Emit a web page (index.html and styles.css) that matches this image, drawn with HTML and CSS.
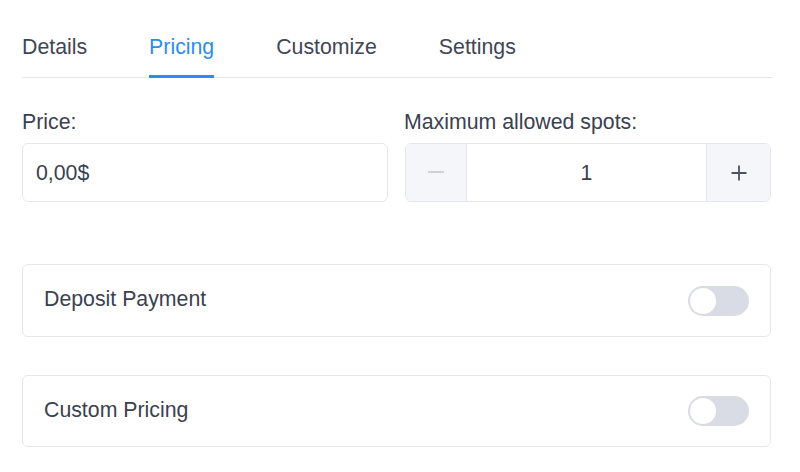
FILE: index.html
```html
<!DOCTYPE html>
<html>
<head>
<meta charset="utf-8">
<link rel="stylesheet" href="styles.css">
</head>
<body>
<div class="page">
  <nav class="tabs">
    <div class="tab">Details</div>
    <div class="tab active">Pricing</div>
    <div class="tab">Customize</div>
    <div class="tab">Settings</div>
  </nav>

  <div class="fields">
    <div class="field">
      <div class="label">Price:</div>
      <div class="input">0,00$</div>
    </div>
    <div class="field">
      <div class="label">Maximum allowed spots:</div>
      <div class="stepper">
        <div class="step-btn minus"><span class="minus-bar"></span></div>
        <div class="step-value">1</div>
        <div class="step-btn plus">
          <svg width="18" height="18" viewBox="0 0 18 18"><path d="M9 1.5V16.5M1.5 9H16.5" stroke="#4b5262" stroke-width="1.8" fill="none"/></svg>
        </div>
      </div>
    </div>
  </div>

  <div class="cards">
    <div class="card">
      <span class="card-title">Deposit Payment</span>
      <span class="toggle"><span class="knob"></span></span>
    </div>
    <div class="card">
      <span class="card-title">Custom Pricing</span>
      <span class="toggle"><span class="knob"></span></span>
    </div>
  </div>
</div>
</body>
</html>
```

FILE: styles.css
```css
* { box-sizing: border-box; }
html, body { margin: 0; padding: 0; background: #ffffff; }
body {
  font-family: "Liberation Sans", Arial, sans-serif;
  font-size: 21.3px;
  line-height: 24px;
  color: #3a4150;
}
.page {
  width: 750px;
  margin-left: 22px;
}
.tabs {
  display: flex;
  gap: 62px;
  padding-top: 35px;
  border-bottom: 1px solid #e4e7ec;
}
.tab {
  padding-bottom: 16px;
  border-bottom: 3px solid transparent;
  margin-bottom: -1px;
  color: #3f4656;
}
.tab.active {
  color: #2d8cf0;
  border-bottom-color: #2d8cf0;
}
.fields {
  display: grid;
  grid-template-columns: 366px 366px;
  column-gap: 17px;
  margin-top: 32px;
}
.label {
  margin-bottom: 9px;
  color: #3a4150;
}
.field + .field .label { margin-left: -1px; }
.input {
  height: 59px;
  border: 1px solid #e4e7ec;
  border-radius: 6px;
  padding-left: 13px;
  display: flex;
  align-items: center;
  color: #3a4150;
}
.stepper {
  height: 59px;
  border: 1px solid #e4e7ec;
  border-radius: 6px;
  display: flex;
  overflow: hidden;
}
.step-btn {
  width: 61px;
  background: #f5f6f9;
  display: flex;
  align-items: center;
  justify-content: center;
}
.step-btn.minus { border-right: 1px solid #e4e7ec; }
.step-btn.plus { width: 64px; border-left: 1px solid #e4e7ec; }
.minus-bar {
  display: block;
  width: 16px;
  height: 2px;
  background: #cdd0d6;
  margin-top: -2px;
}
.step-value {
  flex: 1;
  display: flex;
  align-items: center;
  justify-content: center;
  color: #3a4150;
}
.cards {
  display: flex;
  flex-direction: column;
  gap: 38px;
  margin-top: 62px;
}
.card {
  height: 73px;
  width: 749px;
  border: 1px solid #e4e7ec;
  border-radius: 6px;
  padding: 0 21px;
  display: flex;
  align-items: center;
  justify-content: space-between;
}
.card + .card { height: 72px; }
.card-title { color: #3a4150; margin-bottom: 3px; }
.toggle {
  width: 61px;
  height: 30px;
  border-radius: 15px;
  background: #d9dce4;
  position: relative;
  display: block;
}
.knob {
  position: absolute;
  left: 2px;
  top: 2px;
  width: 26px;
  height: 26px;
  border-radius: 50%;
  background: #ffffff;
}
```
